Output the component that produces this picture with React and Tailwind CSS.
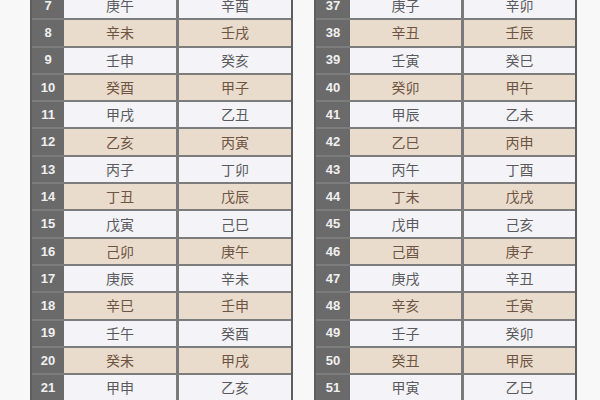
const LEFT = [
  [7, '庚午', '辛酉'],
  [8, '辛未', '壬戌'],
  [9, '壬申', '癸亥'],
  [10, '癸酉', '甲子'],
  [11, '甲戌', '乙丑'],
  [12, '乙亥', '丙寅'],
  [13, '丙子', '丁卯'],
  [14, '丁丑', '戊辰'],
  [15, '戊寅', '己巳'],
  [16, '己卯', '庚午'],
  [17, '庚辰', '辛未'],
  [18, '辛巳', '壬申'],
  [19, '壬午', '癸酉'],
  [20, '癸未', '甲戌'],
  [21, '甲申', '乙亥'],
];

const RIGHT = [
  [37, '庚子', '辛卯'],
  [38, '辛丑', '壬辰'],
  [39, '壬寅', '癸巳'],
  [40, '癸卯', '甲午'],
  [41, '甲辰', '乙未'],
  [42, '乙巳', '丙申'],
  [43, '丙午', '丁酉'],
  [44, '丁未', '戊戌'],
  [45, '戊申', '己亥'],
  [46, '己酉', '庚子'],
  [47, '庚戌', '辛丑'],
  [48, '辛亥', '壬寅'],
  [49, '壬子', '癸卯'],
  [50, '癸丑', '甲辰'],
  [51, '甲寅', '乙巳'],
];

function Row({ row, shaded, numW }) {
  const [n, a, b] = row;
  const cell = shaded
    ? 'bg-[#eadccd] text-[#6e5543]'
    : 'bg-[#f4f4f8] text-[#5a5a5e]';
  return (
    <div className="flex h-[27.3px] border-t-2 border-[#7c7c7c]">
      <div className={`${numW} flex items-center justify-center bg-[#6a6a6a] text-[#f0f0f0] text-[13px] font-bold font-['Liberation_Sans',sans-serif]`}>
        {n}
      </div>
      <div className={`flex-1 flex items-center justify-center text-[14px] ${cell}`}>{a}</div>
      <div className="w-[3px] bg-[#7a7a7a]" />
      <div className={`flex-1 flex items-center justify-center text-[14px] ${cell}`}>{b}</div>
    </div>
  );
}

function Table({ rows, numW }) {
  return (
    <div className="w-[263px] border-x-2 border-[#5e5e5e]">
      {rows.map((r, i) => (
        <Row key={r[0]} row={r} shaded={i % 2 === 1} numW={numW} />
      ))}
    </div>
  );
}

export default function App() {
  return (
    <div className="w-[600px] h-[400px] overflow-hidden bg-[#f8f8f8] font-['Noto_Sans_CJK_SC',sans-serif]">
      <div className="flex -mt-[9px] pl-[30px] gap-[21px]">
        <Table rows={LEFT} numW="w-[32px]" />
        <Table rows={RIGHT} numW="w-[34px]" />
      </div>
    </div>
  );
}
